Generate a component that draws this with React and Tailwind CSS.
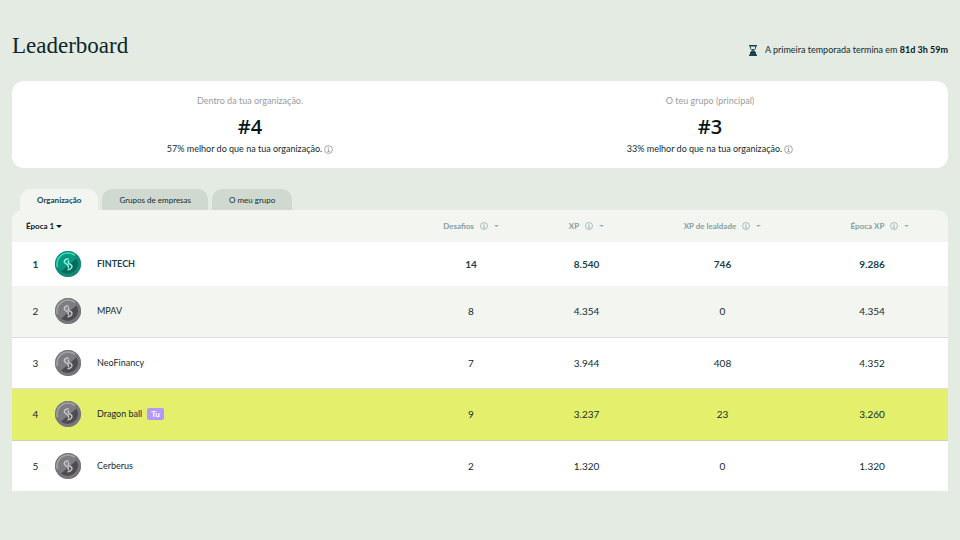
import { useState } from 'react';

const TABS = ['Organização', 'Grupos de empresas', 'O meu grupo'];

const COLUMNS = [
  { key: 'challenges', label: 'Desafios' },
  { key: 'xp', label: 'XP' },
  { key: 'loyalty', label: 'XP de lealdade' },
  { key: 'total', label: 'Época XP' },
];

const TEAMS = [
  { rank: 1, name: 'FINTECH', challenges: '14', xp: '8.540', loyalty: '746', total: '9.286' },
  { rank: 2, name: 'MPAV', challenges: '8', xp: '4.354', loyalty: '0', total: '4.354' },
  { rank: 3, name: 'NeoFinancy', challenges: '7', xp: '3.944', loyalty: '408', total: '4.352' },
  { rank: 4, name: 'Dragon ball', challenges: '9', xp: '3.237', loyalty: '23', total: '3.260', you: true },
  { rank: 5, name: 'Cerberus', challenges: '2', xp: '1.320', loyalty: '0', total: '1.320' },
];

function rowStyle(team) {
  if (team.rank === 1) return 'h-11 bg-white font-bold text-[#17434f]';
  if (team.you) return 'h-[52px] border-b border-[#cfd8a0] bg-[#e4f06c]';
  if (team.rank % 2 === 0) return 'h-[51px] border-b border-[#d9ded9] bg-[#f2f5f0]';
  if (team.rank === TEAMS.length) return 'h-[51px] bg-white';
  return 'h-[51px] border-b border-[#d9ded9] bg-white';
}

function InfoIcon({ className }) {
  return (
    <svg viewBox="0 0 16 16" className={className} fill="none" stroke="currentColor" aria-hidden="true">
      <circle cx="8" cy="8" r="7" strokeWidth="1.3" />
      <path d="M6.4 7H8.2V11.6M6 11.6H10.2" strokeWidth="1.3" />
      <circle cx="8" cy="4.5" r="0.9" fill="currentColor" stroke="none" />
    </svg>
  );
}

function Hourglass() {
  return (
    <svg viewBox="0 0 16 22" className="h-[11px] w-2" aria-hidden="true">
      <path d="M0 0H16V3H0ZM0 19H16V22H0Z" fill="#17434f" />
      <path d="M3 3V7L6.500 11L3 15V19H13V15L9.500 11L13 7V3" fill="none" stroke="#17434f" strokeWidth="2" />
      <path d="M5 8H11L8 11ZM8 11L14 15V20H2V15Z" fill="#17434f" />
    </svg>
  );
}

function Medal({ green }) {
  const [rim, light, face, shade, mark] = green
    ? ['#158773', '#2fdcbd', '#089780', '#056a5b', '#8ff0dd']
    : ['#77767a', '#a3a2a5', '#7d7c80', '#4e4c50', '#c4c3c6'];
  return (
    <svg viewBox="0 0 52 52" className="block size-[26px]" aria-hidden="true">
      <circle cx="26" cy="26" r="26" fill={rim} />
      <path d="M3 34A24.500 24.500 0 0 1 42 7.500Z" fill={light} />
      <circle cx="26" cy="26" r="25" fill="none" stroke={rim} strokeWidth="2" />
      <circle cx="26" cy="26" r="20.5" fill={face} />
      <path d="M43 15A20.5 20.5 0 0 1 12 41Z" fill={shade} />
      <g fill="none" stroke={mark} strokeWidth="3">
        <path d="M27 15.500C18 16 16.500 23 22 25.500C27 27.500 28 30 26.500 34.500" />
        <path d="M25 37.500C34 37 36.500 29.500 31 27C26.500 25 25 22.500 28 18.500" />
      </g>
    </svg>
  );
}

function Caret({ className }) {
  return (
    <svg viewBox="0 0 10 6" className={className} fill="currentColor" preserveAspectRatio="none" aria-hidden="true">
      <path d="M0 0H10L5 6Z" />
    </svg>
  );
}

function Standing({ title, place, note }) {
  return (
    <div className="flex flex-1 flex-col items-center">
      <p className="text-[9px] leading-3 text-[#9a9c9f]">{title}</p>
      <p className="mt-2 font-['Open_Sans',sans-serif] text-xl leading-6 font-semibold text-[#08171a]">{place}</p>
      <p className="mt-1 flex items-center gap-[2px] text-[9px] leading-3">
        {note}
        <InfoIcon className="size-[9px] text-[#85898c]" />
      </p>
    </div>
  );
}

export default function App() {
  const [tab, setTab] = useState(TABS[0]);

  return (
    <div className="min-h-screen bg-[#e3ebe2] px-3 pt-8 pb-12 font-['Lato',sans-serif] text-[#122a31]">
      <header className="flex items-center justify-between">
        <h1 className="font-['Liberation_Serif',serif] text-[23px] leading-7 text-[#0d262c]">Leaderboard</h1>
        <p className="flex items-center gap-2 pt-2 text-[9px] leading-3">
          <Hourglass />
          <span>
            A primeira temporada termina em <strong className="text-[#08171a]">81d 3h 59m</strong>
          </span>
        </p>
      </header>

      <section className="mt-[21px] flex rounded-xl bg-white px-2 pt-[14px] pb-[13px]">
        <Standing title="Dentro da tua organização." place="#4" note="57% melhor do que na tua organização." />
        <Standing title="O teu grupo (principal)" place="#3" note="33% melhor do que na tua organização." />
      </section>

      <nav className="mt-[21px] flex gap-1 px-2" role="tablist">
        {TABS.map((name) => (
          <button
            key={name}
            role="tab"
            aria-selected={tab === name}
            onClick={() => setTab(name)}
            className={`h-[21px] rounded-t-[10px] px-[17px] text-[8px] leading-3 ${
              tab === name ? 'bg-[#f2f5f0] font-bold text-[#17434f]' : 'bg-[#d0d9d0]'
            }`}
          >
            {name}
          </button>
        ))}
      </nav>

      <div className="overflow-hidden rounded-t-[10px] bg-[#f2f5f0]">
        <table className="w-full table-fixed border-collapse text-center text-[10px] leading-3">
          <colgroup>
            <col className="w-[43px]" />
            <col className="w-[42px]" />
            <col />
            <col className="w-[106px]" />
            <col className="w-[125px]" />
            <col className="w-[147px]" />
            <col className="w-[152px]" />
          </colgroup>
          <thead>
            <tr className="h-8 text-[8px]">
              <th colSpan={3} className="pl-[14px] text-left">
                <span className="inline-flex items-center gap-[2px] text-[#08171a]">
                  <select aria-label="Época" className="field-sizing-content appearance-none bg-transparent font-bold">
                    <option>Época 1</option>
                  </select>
                  <Caret className="h-[3px] w-[6px]" />
                </span>
              </th>
              {COLUMNS.map((column) => (
                <th key={column.key} className="text-[#84a0a2] last:pl-4">
                  <button className="inline-flex items-center gap-[6px] font-bold">
                    {column.label}
                    <InfoIcon className="size-2" />
                    <Caret className="h-[2px] w-[5px] opacity-80" />
                  </button>
                </th>
              ))}
            </tr>
          </thead>
          <tbody>
            {TEAMS.map((team) => (
              <tr key={team.rank} className={rowStyle(team)}>
                <td className="pl-1">{team.rank}</td>
                <td>
                  <Medal green={team.rank === 1} />
                </td>
                <td className="text-left text-[9px]">
                  <span className="inline-flex items-center gap-[5px]">
                    {team.name}
                    {team.you && (
                      <span className="rounded-[2px] bg-[#b598fb] px-1 text-[8px] leading-3 font-bold text-white">Tu</span>
                    )}
                  </span>
                </td>
                {COLUMNS.map((column) => (
                  <td key={column.key}>{team[column.key]}</td>
                ))}
              </tr>
            ))}
          </tbody>
        </table>
      </div>
    </div>
  );
}
